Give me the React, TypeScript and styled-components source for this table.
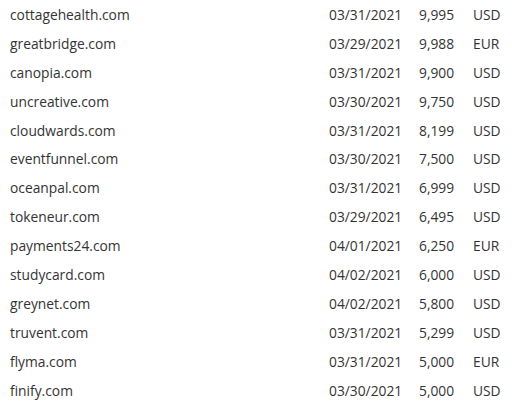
import styled, { createGlobalStyle } from 'styled-components';

const GlobalStyle = createGlobalStyle`
  html, body {
    margin: 0;
    padding: 0;
    background: #fff;
  }
`;

const Table = styled.div`
  display: flex;
  flex-direction: column;
  inline-size: 512px;
  font-family: 'Open Sans', 'Noto Sans', sans-serif;
  font-size: 13.8px;
  color: #333;
`;

const Row = styled.div`
  display: grid;
  grid-template-columns: 319px 90px 54px auto;
  align-items: center;
  block-size: 28.9px;
  padding-inline-start: 10px;
`;

const Cell = styled.span`
  white-space: nowrap;
`;

const rows = [
  { domain: 'cottagehealth.com', date: '03/31/2021', amount: '9,995', currency: 'USD' },
  { domain: 'greatbridge.com', date: '03/29/2021', amount: '9,988', currency: 'EUR' },
  { domain: 'canopia.com', date: '03/31/2021', amount: '9,900', currency: 'USD' },
  { domain: 'uncreative.com', date: '03/30/2021', amount: '9,750', currency: 'USD' },
  { domain: 'cloudwards.com', date: '03/31/2021', amount: '8,199', currency: 'USD' },
  { domain: 'eventfunnel.com', date: '03/30/2021', amount: '7,500', currency: 'USD' },
  { domain: 'oceanpal.com', date: '03/31/2021', amount: '6,999', currency: 'USD' },
  { domain: 'tokeneur.com', date: '03/29/2021', amount: '6,495', currency: 'USD' },
  { domain: 'payments24.com', date: '04/01/2021', amount: '6,250', currency: 'EUR' },
  { domain: 'studycard.com', date: '04/02/2021', amount: '6,000', currency: 'USD' },
  { domain: 'greynet.com', date: '04/02/2021', amount: '5,800', currency: 'USD' },
  { domain: 'truvent.com', date: '03/31/2021', amount: '5,299', currency: 'USD' },
  { domain: 'flyma.com', date: '03/31/2021', amount: '5,000', currency: 'EUR' },
  { domain: 'finify.com', date: '03/30/2021', amount: '5,000', currency: 'USD' },
];

const App = () => (
  <>
    <GlobalStyle />
    <Table>
      {rows.map((r) => (
        <Row key={r.domain}>
          <Cell>{r.domain}</Cell>
          <Cell>{r.date}</Cell>
          <Cell>{r.amount}</Cell>
          <Cell>{r.currency}</Cell>
        </Row>
      ))}
    </Table>
  </>
);

export default App;
